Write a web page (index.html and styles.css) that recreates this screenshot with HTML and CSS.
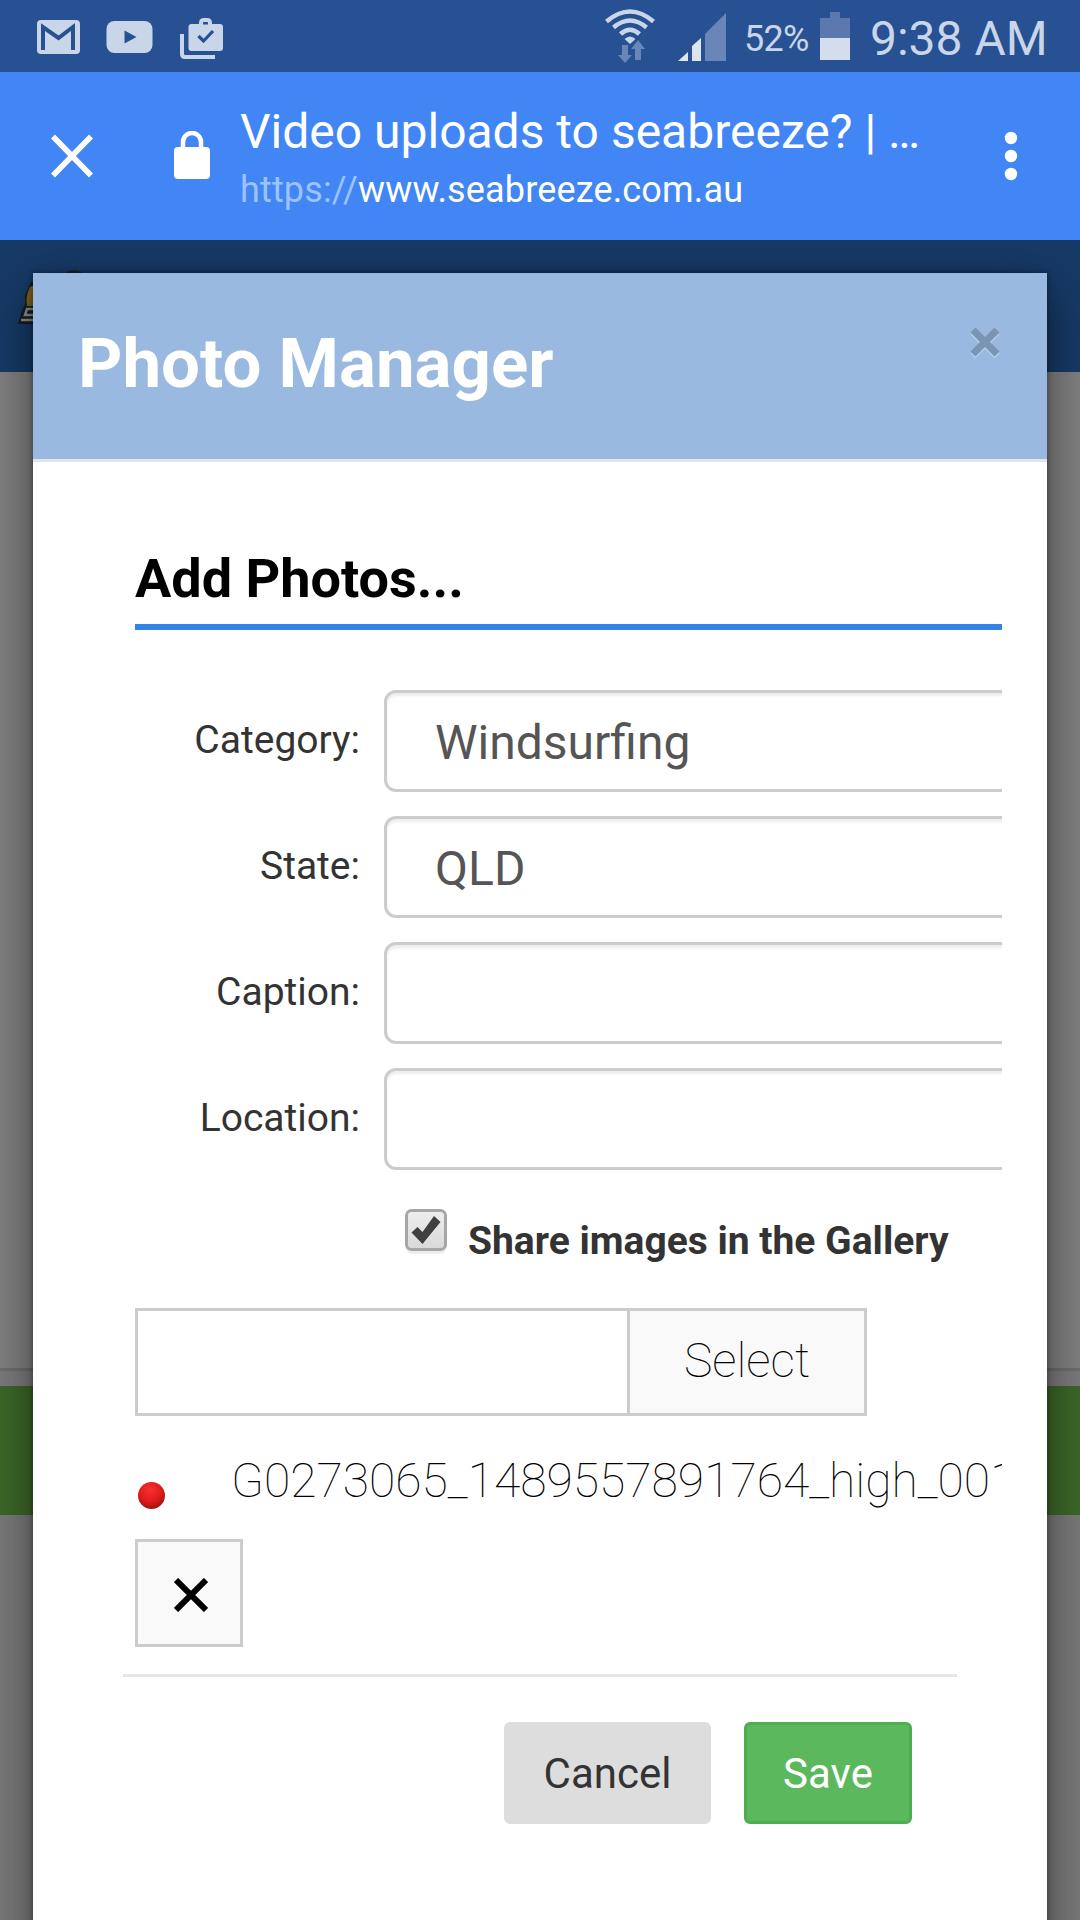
FILE: index.html
```
<!DOCTYPE html>
<html lang="en">
<head>
  <meta charset="UTF-8" />
  <meta name="viewport" content="width=device-width, initial-scale=1.0"/>
  <title>Video uploads to seabreeze?</title>
  <link rel="stylesheet" href="styles.css">
</head>
<body>
  <div class="status-bar">
    <svg class="icon-gmail" width="44" height="36" viewBox="0 0 44 36">
      <rect x="0" y="1" width="43" height="34" rx="4" fill="#c9d5e8"/>
      <path d="M6 31V8l15.500 11L36 8v23" fill="none" stroke="#275192" stroke-width="4"/>
    </svg>
    <svg class="icon-youtube" width="48" height="34" viewBox="0 0 48 34">
      <rect x="0.500" y="1" width="46" height="32" rx="8" fill="#c9d5e8"/>
      <path d="M18.500 10.500v13L30.500 17z" fill="#275192"/>
    </svg>
    <svg class="icon-work" width="44" height="42" viewBox="0 0 44 42">
      <path d="M2 16v20q0 3 3 3h30" fill="none" stroke="#c9d5e8" stroke-width="4"/>
      <path d="M21 8V5q0-3 3-3h3q3 0 3 3v3" fill="none" stroke="#c9d5e8" stroke-width="4"/>
      <rect x="8.500" y="6" width="34.500" height="27" rx="3" fill="#c9d5e8"/>
      <rect x="23" y="4.500" width="5" height="2" fill="#275192"/>
      <path d="M18.500 18l5 5L33 13" fill="none" stroke="#275192" stroke-width="3.200"/>
    </svg>

    <svg class="icon-wifi" width="50" height="54" viewBox="0 0 50 54">
      <g fill="none" stroke="#c9d5e8" stroke-width="4.500">
        <path d="M1.500 12.500q23.500-20 47 0"/>
        <path d="M8.500 18.500q16.500-14 33 0"/>
        <path d="M15.500 25q9.500-8.500 19 0"/>
      </g>
      <path d="M19.500 30q5.500-5 11 0L25 35z" fill="#c9d5e8"/>
      <path d="M17 36h6v10h4l-7 8-7-8h4zM30 51V40h-4l7-9 7 9h-4v11z" fill="#6a86b8"/>
    </svg>
    <svg class="icon-signal" width="49" height="48" viewBox="0 0 49 48">
      <path d="M0 48l10-9v9zM14 48V33l9-8v23z" fill="#dde5f0"/>
      <path d="M27 48V21L48 0v48z" fill="#6a86b8"/>
    </svg>
    <span class="battery-text">52%</span>
    <svg class="icon-battery" width="30" height="48" viewBox="0 0 30 48">
      <path d="M0 6h10V0h10v6h10v20H0z" fill="#5b79ae"/>
      <rect x="0" y="26" width="30" height="22" fill="#d3ddeb"/>
    </svg>
    <span class="clock">9:38 AM</span>
  </div>

  <div class="browser-bar">
    <svg class="icon-close" width="42" height="44" viewBox="0 0 42 44">
      <path d="M2 2.500l38 39M40 2.500l-38 39" stroke="#fff" stroke-width="5.500"/>
    </svg>
    <svg class="icon-lock" width="36" height="48" viewBox="0 0 36 48">
      <path d="M9 20v-9a9 9 0 0 1 18 0v9" fill="none" stroke="#fff" stroke-width="4.500"/>
      <rect x="0" y="16" width="36" height="32" rx="4" fill="#fff"/>
    </svg>
    <div class="page-info">
      <div class="page-title">Video uploads to seabreeze? | …</div>
      <div class="page-url"><span class="scheme">https://</span>www.seabreeze.com.au</div>
    </div>
    <svg class="icon-menu" width="14" height="50" viewBox="0 0 14 50">
      <circle cx="7" cy="7" r="6.200" fill="#fff"/>
      <circle cx="7" cy="25" r="6.200" fill="#fff"/>
      <circle cx="7" cy="43" r="6.200" fill="#fff"/>
    </svg>
  </div>

  <div class="page">
    <div class="site-header">
      <svg class="site-logo" width="100" height="60" viewBox="0 0 100 60">
        <path d="M51 8q11-10 22 0z" fill="#1b232c"/>
        <path d="M19 15l-6 13v9l-3 6-4 14h30V15z" fill="#151c24"/>
        <path d="M18 20q-5 10-3 19h8V18z" fill="#806120"/>
        <path d="M22 42h-7l-2 6h9M9 53h14" fill="none" stroke="#8b8b8b" stroke-width="2.500"/>
      </svg>
    </div>
    <div class="site-content"></div>
    <div class="site-strip"></div>
    <div class="site-footer"></div>

    <div class="modal">
      <div class="modal-header">
        <h1>Photo Manager</h1>
        <svg class="modal-close" width="30" height="32" viewBox="0 0 30 32">
          <path d="M3 5l24 24M27 5L3 29" stroke="#b4cdeb" stroke-width="7"/>
          <path d="M3 3l24 24M27 3L3 27" stroke="#7a94b4" stroke-width="7"/>
        </svg>
      </div>

      <form class="modal-body">
        <h2>Add Photos...</h2>

        <div class="row">
          <label for="category">Category:</label>
          <select id="category"><option>Windsurfing</option></select>
        </div>
        <div class="row">
          <label for="state">State:</label>
          <select id="state"><option>QLD</option></select>
        </div>
        <div class="row">
          <label for="caption">Caption:</label>
          <input type="text" id="caption">
        </div>
        <div class="row">
          <label for="location">Location:</label>
          <input type="text" id="location">
        </div>

        <div class="share">
          <svg class="checkbox" width="42" height="45" viewBox="0 0 42 45">
            <defs>
              <linearGradient id="box" x1="0" y1="0" x2="0" y2="1">
                <stop offset="0" stop-color="#eee"/>
                <stop offset="1" stop-color="#d9d9d9"/>
              </linearGradient>
            </defs>
            <rect x="1" y="4" width="40" height="41" rx="6" fill="#eee"/>
            <rect x="1.500" y="1.500" width="39" height="39" rx="5" fill="url(#box)" stroke="#a6a6a6" stroke-width="3"/>
            <path d="M6.500 23.500l6-5.500 5 5L29 7l6.500 6L17.500 35z" fill="#404040"/>
          </svg>
          <span>Share images in the Gallery</span>
        </div>

        <div class="upload">
          <div class="upload-name"></div>
          <button type="button" class="upload-select">Select</button>
        </div>

        <div class="file">
          <span class="dot"></span>
          <span class="file-name">G0273065_1489557891764_high_001</span>
        </div>
        <button type="button" class="remove">
          <svg width="34" height="34" viewBox="0 0 34 34">
            <path d="M2 2l30 30M32 2L2 32" stroke="#000" stroke-width="6"/>
          </svg>
        </button>
      </form>

      <div class="modal-footer">
        <button class="btn btn-cancel">Cancel</button>
        <button class="btn btn-save">Save</button>
      </div>
    </div>
  </div>
</body>
</html>
```
FILE: styles.css
```
* {
  box-sizing: border-box;
}

body {
  margin: 0;
  width: 1080px;
  height: 1920px;
  overflow: hidden;
  display: flex;
  flex-direction: column;
  font-family: Roboto, sans-serif;
  color: #333;
}

svg {
  display: block;
  flex: none;
}

button, input, select {
  font-family: inherit;
  margin: 0;
}

/* phone status bar */
.status-bar {
  display: flex;
  align-items: flex-start;
  flex: none;
  height: 72px;
  padding-left: 37px;
  background-color: #275192;
  color: #c9d5e8;
  white-space: nowrap;
}

.icon-gmail { margin-top: 19px; }
.icon-youtube { margin: 20px 0 0 25px; }
.icon-work { margin: 18px 0 0 26px; }
.icon-wifi { margin: 9px 0 0 381px; }
.icon-signal { margin: 13px 0 0 23px; }

.battery-text {
  width: 64px;
  margin: 14px 0 0 17px;
  font-size: 36px;
  line-height: 50px;
  letter-spacing: -0.7px;
}

.icon-battery { margin: 12px 0 0 12px; }

.clock {
  margin: 9px 0 0 20px;
  font-size: 48px;
  line-height: 60px;
}

/* browser bar */
.browser-bar {
  display: flex;
  align-items: flex-start;
  flex: none;
  height: 168px;
  padding-left: 51px;
  background-color: #4285f4;
  color: #fff;
  white-space: nowrap;
}

.icon-close { margin-top: 62px; }
.icon-lock { margin: 59px 0 0 81px; }

.page-info {
  width: 700px;
  margin: 30px 0 0 30px;
}

.page-title {
  font-size: 48px;
  line-height: 60px;
}

.page-url {
  font-size: 36px;
  line-height: 56px;
  letter-spacing: 0.16px;
}

.scheme {
  color: #9ac3ff;
}

.icon-menu { margin: 59px 0 0 64px; }

/* dimmed site behind the modal */
.page {
  position: relative;
  flex: 1;
  display: flex;
  flex-direction: column;
  overflow: hidden;
}

.site-header {
  height: 132px;
  padding: 27px 0 0 12px;
  background-color: #163a66;
}

.site-content {
  height: 999px;
  background-color: #808080;
  border-bottom: 3px solid #6e6e6e;
}

.site-strip {
  height: 144px;
  border-top: 15px solid #7d7a7d;
  background-color: #3c6828;
}

.site-footer {
  flex: 1;
  background-color: #7a7a7a;
}

.modal {
  position: absolute;
  top: 33px;
  left: 33px;
  right: 33px;
  bottom: -60px;
  background-color: #fff;
  box-shadow: 0 15px 45px rgba(0, 0, 0, 0.5), 0 0 6px rgba(0, 0, 0, 0.4);
}

.modal-header {
  display: flex;
  justify-content: space-between;
  height: 189px;
  padding: 42px 47px 0 45px;
  background-color: #99b9e1;
  border-bottom: 3px solid #e0e5ef;
}

h1 {
  margin: 0;
  color: #fff;
  font-size: 69px;
  line-height: 98px;
}

.modal-close { margin-top: 12px; }

.modal-body {
  width: 867px;
  height: 1212px;
  margin-left: 102px;
  padding-top: 87px;
  overflow: hidden;
}

h2 {
  height: 81px;
  margin: 0 0 60px;
  border-bottom: 6px solid #3385e5;
  color: #000;
  font-size: 54px;
  line-height: 60px;
}

.row {
  display: flex;
  gap: 24px;
  width: 1100px;
  height: 102px;
  margin-bottom: 24px;
}

label {
  width: 225px;
  text-align: right;
  font-size: 39px;
  line-height: 100px;
}

.row input, .row select {
  flex: 1;
  height: 102px;
  padding: 2px 48px 0;
  appearance: none;
  background-color: #fff;
  border: 3px solid #ccc;
  border-radius: 12px;
  box-shadow: inset 0 3px 3px rgba(0, 0, 0, 0.075);
  color: #555;
  font-size: 48px;
}

.share {
  display: flex;
  gap: 21px;
  height: 99px;
  margin-top: 39px;
  padding-left: 270px;
  font-size: 39px;
  font-weight: bold;
  line-height: 65px;
  white-space: nowrap;
}

.upload {
  display: flex;
  width: 732px;
  height: 108px;
  border: 3px solid #ccc;
}

.upload-name {
  flex: 1;
}

.upload-select {
  width: 237px;
  padding: 0 0 4px;
  background-color: #f9f9f9;
  border: none;
  border-left: 3px solid #ccc;
  color: #000;
  font-size: 48px;
  font-weight: 100;
}

.file {
  display: flex;
  height: 123px;
  padding-top: 35px;
}

.dot {
  flex: none;
  width: 27px;
  height: 27px;
  margin: 31px 66px 0 3px;
  border-radius: 50%;
  background: radial-gradient(circle at 45% 30%, #f73030, #e01c1c 45%, #7c0c0c);
}

.file-name {
  color: #000;
  font-size: 48px;
  font-weight: 100;
  line-height: 60px;
  white-space: nowrap;
}

.remove {
  display: flex;
  align-items: center;
  justify-content: center;
  width: 108px;
  height: 108px;
  padding: 3px 0 0 3px;
  background-color: #f9f9f9;
  border: 3px solid #ccc;
}

.modal-footer {
  display: flex;
  justify-content: flex-end;
  gap: 33px;
  width: 834px;
  margin-left: 90px;
  padding: 45px 45px 0 0;
  border-top: 3px solid #e5e5e5;
}

.btn {
  height: 102px;
  padding: 0;
  border: 3px solid #ddd;
  border-radius: 6px;
  font-size: 42px;
}

.btn-cancel {
  width: 207px;
  background-color: #ddd;
  color: #333;
}

.btn-save {
  width: 168px;
  background-color: #5cb85c;
  border-color: #4cae4c;
  color: #fff;
}
```
